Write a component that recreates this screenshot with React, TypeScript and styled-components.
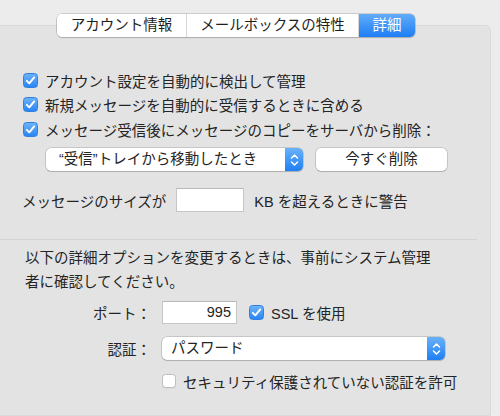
import React from "react";
import styled, { createGlobalStyle } from "styled-components";

const Global = createGlobalStyle`
  html, body { margin: 0; padding: 0; background: #ececec; }
  body {
    font-family: "Liberation Sans", "Noto Sans CJK JP", sans-serif;
    font-size: 14.5px;
    color: #242424;
    overflow: hidden;
  }
`;

const Window = styled.div`
  width: 510px;
  height: 416px;
  margin-left: -19px;
  padding-top: 14px;
  box-sizing: border-box;
  display: flex;
  flex-direction: column;
  align-items: center;
  overflow: hidden;
`;

const Tabs = styled.div`
  position: relative;
  z-index: 1;
  display: flex;
  height: 23px;
  background: #fff;
  border-radius: 5px;
  box-shadow: 0 0 0 0.5px rgba(0, 0, 0, 0.28), 0 1px 1.5px rgba(0, 0, 0, 0.12);
  overflow: hidden;
`;

const Tab = styled.div<{ $active?: boolean; $w: number }>`
  width: ${(p) => p.$w}px;
  text-align: center;
  line-height: 23px;
  box-sizing: border-box;
  & + & {
    border-left: 1px solid #d6d6d6;
  }
  color: ${(p) => (p.$active ? "#fff" : "#1e1e1e")};
  background: ${(p) =>
    p.$active ? "linear-gradient(#62acf9, #1d7ef4)" : "#fff"};
`;

const Panel = styled.div`
  align-self: stretch;
  flex: 1;
  margin-top: -12px;
  background: #e3e3e3;
  border: 1px solid #dadada;
  border-radius: 0 6px 0 0;
  padding: 42px 0 0 18px;
  display: flex;
  flex-direction: column;
`;

const CheckRow = styled.div<{ $ml: number; $h?: number }>`
  display: flex;
  align-items: center;
  gap: 7px;
  height: ${(p) => p.$h ?? 24.5}px;
  margin-left: ${(p) => p.$ml}px;
`;

const Box = styled.div<{ $on?: boolean }>`
  width: ${(p) => (p.$on ? 15 : 14)}px;
  height: ${(p) => (p.$on ? 15 : 14)}px;
  box-sizing: border-box;
  border-radius: 3.5px;
  flex: none;
  display: flex;
  align-items: center;
  justify-content: center;
  background: ${(p) => (p.$on ? "linear-gradient(#6bb3fa, #2a85f3)" : "#fff")};
  border: ${(p) => (p.$on ? "0.5px solid #2f7fe0" : "1px solid #bdbdbd")};
  box-shadow: ${(p) => (p.$on ? "none" : "0 0.5px 0.5px rgba(0,0,0,0.08)")};
`;

const Checkbox = ({ on }: { on?: boolean }) => (
  <Box $on={on}>
    {on && (
      <svg width="11" height="11" viewBox="0 0 11 11">
        <polyline
          points="1.8,5.8 4.3,8.3 9.2,2.4"
          fill="none"
          stroke="#fff"
          strokeWidth="1.9"
          strokeLinecap="round"
          strokeLinejoin="round"
        />
      </svg>
    )}
  </Box>
);

const ControlRow = styled.div<{ $mt: number; $ml: number; $gap: number }>`
  display: flex;
  align-items: center;
  margin-top: ${(p) => p.$mt}px;
  margin-left: ${(p) => p.$ml}px;
  gap: ${(p) => p.$gap}px;
`;

const PopupBox = styled.div<{ $w: number }>`
  width: ${(p) => p.$w}px;
  height: 23px;
  display: flex;
  background: #fff;
  border-radius: 5px;
  box-shadow: 0 0 0 0.5px rgba(0, 0, 0, 0.25), 0 1px 1px rgba(0, 0, 0, 0.12);
`;

const PopupText = styled.div<{ $pad: number }>`
  flex: 1;
  padding-left: ${(p) => p.$pad}px;
  line-height: 23px;
  white-space: nowrap;
`;

const Stepper = styled.div`
  width: 18px;
  border-radius: 0 5px 5px 0;
  background: linear-gradient(#6ab2fa, #1f7ff3);
  display: flex;
  align-items: center;
  justify-content: center;
`;

const Popup = ({ w, pad, text }: { w: number; pad: number; text: string }) => (
  <PopupBox $w={w}>
    <PopupText $pad={pad}>{text}</PopupText>
    <Stepper>
      <svg width="9" height="14" viewBox="0 0 9 14">
        <polyline points="1.5,5 4.5,2 7.5,5" fill="none" stroke="#fff" strokeWidth="1.5" strokeLinecap="round" strokeLinejoin="round" />
        <polyline points="1.5,9 4.5,12 7.5,9" fill="none" stroke="#fff" strokeWidth="1.5" strokeLinecap="round" strokeLinejoin="round" />
      </svg>
    </Stepper>
  </PopupBox>
);

const Button = styled.div`
  width: 131px;
  height: 23px;
  line-height: 23px;
  text-align: center;
  background: #fff;
  border-radius: 5px;
  box-shadow: 0 0 0 0.5px rgba(0, 0, 0, 0.25), 0 1px 1px rgba(0, 0, 0, 0.12);
`;

const Field = styled.div<{ $w: number; $h: number }>`
  width: ${(p) => p.$w}px;
  height: ${(p) => p.$h}px;
  box-sizing: border-box;
  background: #fff;
  border: 1px solid #c6c6c6;
  border-top-color: #b8b8b8;
  text-align: right;
  padding-right: 5px;
  line-height: ${(p) => p.$h - 2}px;
`;

const Separator = styled.div`
  height: 1px;
  background: #d3d3d3;
  margin: 27px 13px 0 0;
`;

const Paragraph = styled.p`
  margin: 6px 0 0 25px;
  width: 412px;
  line-height: 24px;
`;

const Form = styled.div`
  display: grid;
  grid-template-columns: 151px auto;
  column-gap: 11px;
  row-gap: 13px;
  margin-top: 7px;
  align-items: center;
`;

const Label = styled.div`
  text-align: right;
  white-space: nowrap;
`;

const Inline = styled.div`
  display: flex;
  align-items: center;
  gap: 12px;
`;

const Pair = styled.div`
  display: flex;
  align-items: center;
  gap: 7px;
`;

export default function App() {
  return (
    <>
      <Global />
      <Window>
        <Tabs>
          <Tab $w={129}>アカウント情報</Tab>
          <Tab $w={172}>メールボックスの特性</Tab>
          <Tab $w={57} $active>
            詳細
          </Tab>
        </Tabs>
        <Panel>
          <CheckRow $ml={23}>
            <Checkbox on />
            <span>アカウント設定を自動的に検出して管理</span>
          </CheckRow>
          <CheckRow $ml={23}>
            <Checkbox on />
            <span>新規メッセージを自動的に受信するときに含める</span>
          </CheckRow>
          <CheckRow $ml={23}>
            <Checkbox on />
            <span>メッセージ受信後にメッセージのコピーをサーバから削除：</span>
          </CheckRow>
          <ControlRow $mt={6.5} $ml={46} $gap={13}>
            <Popup w={257} pad={13} text="“受信”トレイから移動したとき" />
            <Button>今すぐ削除</Button>
          </ControlRow>
          <ControlRow $mt={17} $ml={22} $gap={10}>
            <span>メッセージのサイズが</span>
            <Field $w={68} $h={24} />
            <span>KB を超えるときに警告</span>
          </ControlRow>
          <Separator />
          <Paragraph>
            以下の詳細オプションを変更するときは、事前にシステム管理者に確認してください。
          </Paragraph>
          <Form>
            <Label>ポート：</Label>
            <Inline>
              <Field $w={75} $h={23}>995</Field>
              <Pair>
                <Checkbox on />
                <span>SSL を使用</span>
              </Pair>
            </Inline>
            <Label>認証：</Label>
            <Popup w={283} pad={9} text="パスワード" />
            <span />
            <CheckRow $ml={0} $h={16}>
              <Checkbox />
              <span>セキュリティ保護されていない認証を許可</span>
            </CheckRow>
          </Form>
        </Panel>
      </Window>
    </>
  );
}
